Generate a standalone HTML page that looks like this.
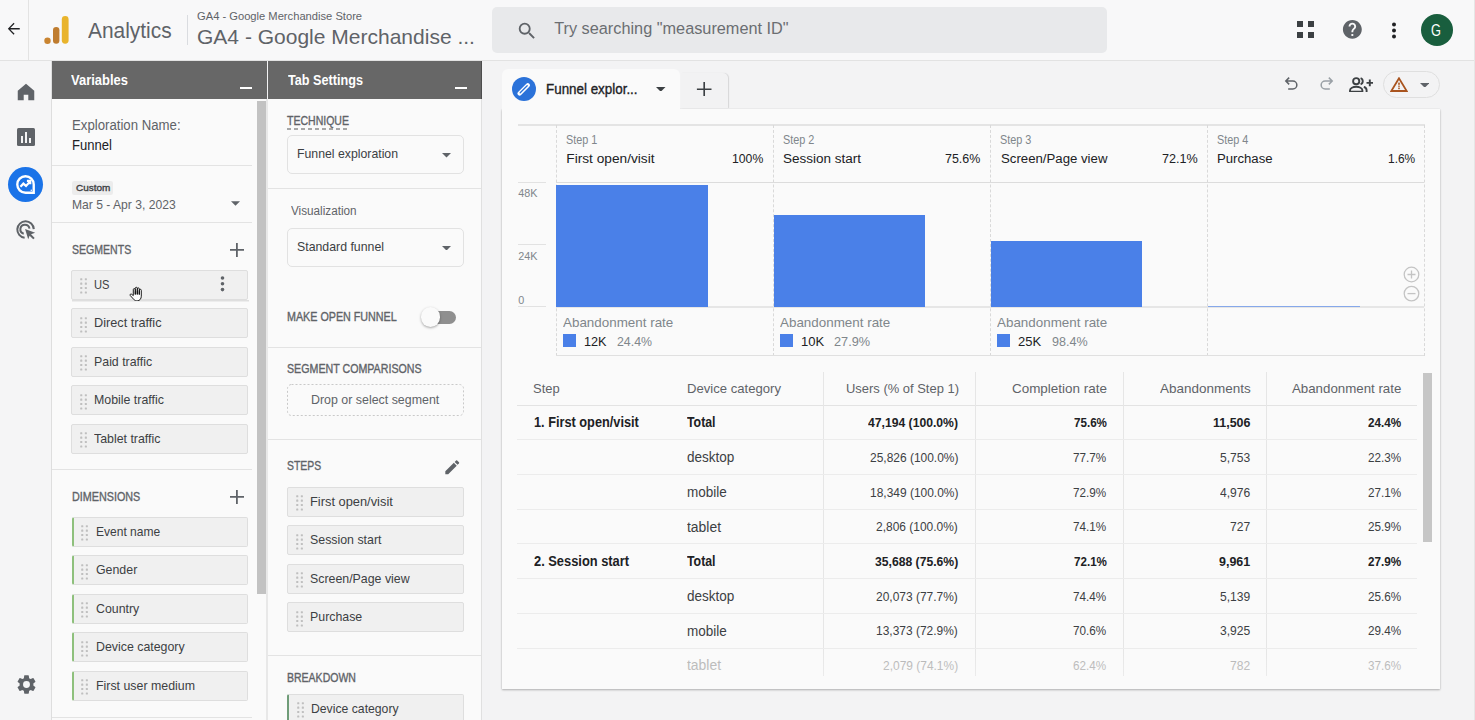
<!DOCTYPE html><html><head><meta charset="utf-8"><style>
*{box-sizing:border-box;margin:0;padding:0}
html,body{width:1475px;height:720px;overflow:hidden}
body{position:relative;background:#f3f3f4;font-family:"Liberation Sans",sans-serif;color:#202124}
.a{position:absolute}
.t{position:absolute;white-space:nowrap;line-height:1}
</style></head><body>
<div class="a" style="left:0px;top:0px;width:1475px;height:61px;background:#f8f8f9;border-bottom:1px solid #e2e2e2"></div>
<div class="a" style="left:28px;top:0px;width:1px;height:60px;background:#e3e3e3;"></div>
<svg class="a" style="left:6.6px;top:22.2px;" width="13.6" height="13.6" viewBox="0 0 16 16"><path d="M15 7.2H3.9l5-5L7.8 1 1 8l6.8 7 1.1-1.1-5-5H15z" fill="#202124"/></svg>
<svg class="a" style="left:43px;top:15px;" width="28" height="30" viewBox="0 0 28 30"><rect x="18.8" y="1.1" width="6.8" height="27.6" rx="3.4" fill="#e9b42c"/><rect x="10" y="12.1" width="6.4" height="16.6" rx="3.2" fill="#bf7c2f"/><circle cx="4.5" cy="25.7" r="3.2" fill="#c98431"/></svg>
<div class="t" style="left:87.50px;top:19.77px;font-size:21.8px;color:#5f6368;transform:scaleX(0.9587);transform-origin:0 0;">Analytics</div>
<div class="a" style="left:187px;top:15px;width:1px;height:30px;background:#dadce0;"></div>
<div class="t" style="left:196.70px;top:10.81px;font-size:11.4px;color:#5f6368;transform:scaleX(0.9801);transform-origin:0 0;">GA4 - Google Merchandise Store</div>
<div class="t" style="left:196.70px;top:27.02px;font-size:20.8px;color:#5f6368;transform:scaleX(1.0102);transform-origin:0 0;">GA4 - Google Merchandise ...</div>
<div class="a" style="left:492px;top:7px;width:615px;height:46px;background:#e8e9eb;border-radius:5px"></div>
<svg class="a" style="left:516px;top:20px;" width="22" height="22" viewBox="0 0 24 24"><path d="M15.5 14h-.79l-.28-.27A6.47 6.47 0 0 0 16 9.5 6.5 6.5 0 1 0 9.5 16c1.61 0 3.09-.59 4.23-1.57l.27.28v.79l5 4.99L20.49 19l-4.99-5zm-6 0C7.01 14 5 11.99 5 9.5S7.01 5 9.5 5 14 7.01 14 9.5 11.99 14 9.5 14z" fill="#5f6368"/></svg>
<div class="t" style="left:554.20px;top:20.14px;font-size:16.3px;color:#6b6e72;">Try searching "measurement ID"</div>
<svg class="a" style="left:1297px;top:21px;" width="18" height="18" viewBox="0 0 18 18"><g fill="#3c4043"><rect x="0" y="0" width="6" height="6"/><rect x="11" y="0" width="6" height="6"/><rect x="0" y="11" width="6" height="6"/><rect x="11" y="11" width="6" height="6"/></g></svg>
<svg class="a" style="left:1340.6px;top:18.4px;" width="22.7" height="22.7" viewBox="0 0 24 24"><path d="M12 2C6.48 2 2 6.48 2 12s4.48 10 10 10 10-4.48 10-10S17.52 2 12 2zm1 17h-2v-2h2v2zm2.07-7.75l-.9.92C13.45 12.9 13 13.5 13 15h-2v-.5c0-1.1.45-2.1 1.17-2.83l1.24-1.26c.37-.36.59-.86.59-1.41 0-1.1-.9-2-2-2s-2 .9-2 2H8c0-2.21 1.79-4 4-4s4 1.79 4 4c0 .88-.36 1.68-.93 2.25z" fill="#5f6368"/></svg>
<svg class="a" style="left:1390px;top:21px;" width="8" height="18" viewBox="0 0 8 18"><g fill="#202124"><circle cx="4" cy="3.5" r="2"/><circle cx="4" cy="9.5" r="2"/><circle cx="4" cy="15.5" r="2"/></g></svg>
<div class="a" style="left:1421px;top:14px;width:32px;height:32px;background:#195e3e;border-radius:50%"></div>
<div class="t" style="left:1431.40px;top:21.85px;font-size:16.3px;color:#fff;transform:scaleX(0.7865);transform-origin:0 0;">G</div>
<div class="a" style="left:1473.5px;top:0px;width:1.5px;height:720px;background:#e6e6e6;"></div>
<div class="a" style="left:0px;top:61px;width:52px;height:659px;background:#f5f5f6;"></div>
<svg class="a" style="left:15px;top:81px;" width="22" height="22" viewBox="0 0 24 24"><path d="M12 3 3 10.5V21h6.5v-6h5v6H21V10.5z" fill="#5f6368"/></svg>
<svg class="a" style="left:17px;top:128px;" width="18" height="18" viewBox="0 0 18 18"><rect x="0" y="0" width="18" height="18" rx="1.5" fill="#5f6368"/><rect x="4" y="8" width="2" height="7" fill="#f3f3f4"/><rect x="8" y="4" width="2" height="11" fill="#f3f3f4"/><rect x="12" y="10" width="2" height="5" fill="#f3f3f4"/></svg>
<div class="a" style="left:8px;top:167px;width:35px;height:35px;background:#1a73e8;border-radius:50%"></div>
<svg class="a" style="left:15px;top:174px;" width="21" height="21" viewBox="0 0 24 24"><path d="M12 2.6a9.4 9.4 0 1 0 0 18.8h9.4V12A9.4 9.4 0 0 0 12 2.6z" fill="none" stroke="#fff" stroke-width="2.7"/><path d="M6.2 14.6l3.4-3.6 3 2.6 4.6-5M13.6 7.9h3.8v3.8" fill="none" stroke="#fff" stroke-width="2.5"/><circle cx="18.6" cy="18.6" r="0.9" fill="#fff"/></svg>
<svg class="a" style="left:15px;top:219px;" width="22" height="22" viewBox="0 0 24 24"><path d="M10.5 20.5A9 9 0 1 1 20.5 11" fill="none" stroke="#5f6368" stroke-width="2.2"/><path d="M9.5 16a5 5 0 1 1 6.3-5.5" fill="none" stroke="#5f6368" stroke-width="2.2"/><path d="M11 11l11 4-4.5 1.6 4 4-1.6 1.6-4-4L14.4 22z" fill="#5f6368"/></svg>
<svg class="a" style="left:14.5px;top:672.5px;" width="23" height="23" viewBox="0 0 24 24"><path d="M19.14 12.94c.04-.3.06-.61.06-.94 0-.32-.02-.64-.07-.94l2.03-1.58a.49.49 0 0 0 .12-.61l-1.92-3.32a.49.49 0 0 0-.59-.22l-2.39.96c-.5-.38-1.03-.7-1.62-.94l-.36-2.54a.48.48 0 0 0-.48-.41h-3.84c-.24 0-.43.17-.47.41l-.36 2.54c-.59.24-1.13.57-1.62.94l-2.39-.96a.49.49 0 0 0-.59.22L2.74 8.87c-.12.21-.08.47.12.61l2.03 1.58c-.05.3-.09.63-.09.94s.02.64.07.94l-2.03 1.58a.49.49 0 0 0-.12.61l1.92 3.32c.12.22.37.29.59.22l2.39-.96c.5.38 1.03.7 1.62.94l.36 2.54c.05.24.24.41.48.41h3.84c.24 0 .44-.17.47-.41l.36-2.54c.59-.24 1.13-.56 1.62-.94l2.39.96c.22.08.47 0 .59-.22l1.92-3.32c.12-.22.07-.47-.12-.61l-2.01-1.58zM12 15.6A3.6 3.6 0 1 1 12 8.4a3.6 3.6 0 0 1 0 7.2z" fill="#5f6368"/></svg>
<div class="a" style="left:52px;top:61px;width:215px;height:38px;background:#676767;"></div>
<div class="t" style="left:71.40px;top:71.95px;font-size:15px;color:#fff;font-weight:bold;transform:scaleX(0.8641);transform-origin:0 0;">Variables</div>
<div class="a" style="left:240px;top:86.6px;width:12px;height:2.1px;background:#fff;"></div>
<div class="a" style="left:268px;top:61px;width:214px;height:38px;background:#676767;"></div>
<div class="a" style="left:481px;top:61px;width:1px;height:38px;background:#4d4d4d;"></div>
<div class="t" style="left:287.50px;top:71.95px;font-size:15px;color:#fff;font-weight:bold;transform:scaleX(0.8428);transform-origin:0 0;">Tab Settings</div>
<div class="a" style="left:455px;top:86.6px;width:12px;height:2.1px;background:#fff;"></div>
<div class="a" style="left:52px;top:99px;width:215px;height:621px;background:#fafafa;"></div>
<div class="a" style="left:51px;top:61px;width:1px;height:659px;background:#dedede;"></div>
<div class="a" style="left:266px;top:99px;width:2px;height:621px;background:#e8e8e8;"></div>
<div class="a" style="left:257px;top:101px;width:9px;height:493px;background:#c2c2c2;"></div>
<div class="t" style="left:72.10px;top:117.80px;font-size:14px;color:#5f6368;transform:scaleX(0.9431);transform-origin:0 0;">Exploration Name:</div>
<div class="t" style="left:72.10px;top:137.90px;font-size:14px;color:#202124;transform:scaleX(0.9314);transform-origin:0 0;">Funnel</div>
<div class="a" style="left:52px;top:165px;width:200px;height:1px;background:#e3e3e3;"></div>
<div class="a" style="left:72px;top:180.5px;width:41px;height:14.6px;background:#ececec;border-radius:2px"></div>
<div class="t" style="left:75.80px;top:182.57px;font-size:9.8px;color:#3c4043;-webkit-text-stroke:0.35px #3c4043;transform:scaleX(1.0189);transform-origin:0 0;">Custom</div>
<div class="t" style="left:72.10px;top:197.81px;font-size:13.4px;color:#5f6368;transform:scaleX(0.9041);transform-origin:0 0;">Mar 5 - Apr 3, 2023</div>
<svg class="a" style="left:231px;top:201px;" width="9" height="5" viewBox="0 0 10 5"><path d="M0 0h10L5 5z" fill="#5f6368"/></svg>
<div class="a" style="left:52px;top:222px;width:200px;height:1px;background:#e3e3e3;"></div>
<div class="t" style="left:71.80px;top:243.64px;font-size:12.3px;color:#5f6368;-webkit-text-stroke:0.35px #5f6368;transform:scaleX(0.8579);transform-origin:0 0;">SEGMENTS</div>
<svg class="a" style="left:230px;top:243px;" width="14" height="14" viewBox="0 0 14 14"><path d="M6 0h1.8v6H14v1.8H7.8V14H6V7.8H0V6h6z" fill="#5f6368"/></svg>
<div class="a" style="left:71.2px;top:269.5px;width:177px;height:30px;background:#f0f0f0;border:1px solid #dedede;border-radius:2px;"></div>
<svg class="a" style="left:79.5px;top:278.3px;" width="7" height="16" viewBox="0 0 7 16"><g fill="#bfbfbf"><rect x="0.19999999999999996" y="0.19999999999999996" width="2.1" height="2.1" rx="0.5"/><rect x="0.19999999999999996" y="4.6" width="2.1" height="2.1" rx="0.5"/><rect x="0.19999999999999996" y="9" width="2.1" height="2.1" rx="0.5"/><rect x="0.19999999999999996" y="13.4" width="2.1" height="2.1" rx="0.5"/><rect x="4.8" y="0.19999999999999996" width="2.1" height="2.1" rx="0.5"/><rect x="4.8" y="4.6" width="2.1" height="2.1" rx="0.5"/><rect x="4.8" y="9" width="2.1" height="2.1" rx="0.5"/><rect x="4.8" y="13.4" width="2.1" height="2.1" rx="0.5"/></g></svg>
<div class="t" style="left:93.60px;top:277.50px;font-size:13.3px;color:#3c4043;transform:scaleX(0.8384);transform-origin:0 0;">US</div>
<div class="a" style="left:71.2px;top:308.0px;width:177px;height:30px;background:#f0f0f0;border:1px solid #dedede;border-radius:2px;"></div>
<svg class="a" style="left:79.5px;top:316.8px;" width="7" height="16" viewBox="0 0 7 16"><g fill="#bfbfbf"><rect x="0.19999999999999996" y="0.19999999999999996" width="2.1" height="2.1" rx="0.5"/><rect x="0.19999999999999996" y="4.6" width="2.1" height="2.1" rx="0.5"/><rect x="0.19999999999999996" y="9" width="2.1" height="2.1" rx="0.5"/><rect x="0.19999999999999996" y="13.4" width="2.1" height="2.1" rx="0.5"/><rect x="4.8" y="0.19999999999999996" width="2.1" height="2.1" rx="0.5"/><rect x="4.8" y="4.6" width="2.1" height="2.1" rx="0.5"/><rect x="4.8" y="9" width="2.1" height="2.1" rx="0.5"/><rect x="4.8" y="13.4" width="2.1" height="2.1" rx="0.5"/></g></svg>
<div class="t" style="left:93.60px;top:316.00px;font-size:13.3px;color:#3c4043;transform:scaleX(0.9549);transform-origin:0 0;">Direct traffic</div>
<div class="a" style="left:71.2px;top:346.5px;width:177px;height:30px;background:#f0f0f0;border:1px solid #dedede;border-radius:2px;"></div>
<svg class="a" style="left:79.5px;top:355.3px;" width="7" height="16" viewBox="0 0 7 16"><g fill="#bfbfbf"><rect x="0.19999999999999996" y="0.19999999999999996" width="2.1" height="2.1" rx="0.5"/><rect x="0.19999999999999996" y="4.6" width="2.1" height="2.1" rx="0.5"/><rect x="0.19999999999999996" y="9" width="2.1" height="2.1" rx="0.5"/><rect x="0.19999999999999996" y="13.4" width="2.1" height="2.1" rx="0.5"/><rect x="4.8" y="0.19999999999999996" width="2.1" height="2.1" rx="0.5"/><rect x="4.8" y="4.6" width="2.1" height="2.1" rx="0.5"/><rect x="4.8" y="9" width="2.1" height="2.1" rx="0.5"/><rect x="4.8" y="13.4" width="2.1" height="2.1" rx="0.5"/></g></svg>
<div class="t" style="left:93.60px;top:354.50px;font-size:13.3px;color:#3c4043;transform:scaleX(0.9300);transform-origin:0 0;">Paid traffic</div>
<div class="a" style="left:71.2px;top:385.0px;width:177px;height:30px;background:#f0f0f0;border:1px solid #dedede;border-radius:2px;"></div>
<svg class="a" style="left:79.5px;top:393.8px;" width="7" height="16" viewBox="0 0 7 16"><g fill="#bfbfbf"><rect x="0.19999999999999996" y="0.19999999999999996" width="2.1" height="2.1" rx="0.5"/><rect x="0.19999999999999996" y="4.6" width="2.1" height="2.1" rx="0.5"/><rect x="0.19999999999999996" y="9" width="2.1" height="2.1" rx="0.5"/><rect x="0.19999999999999996" y="13.4" width="2.1" height="2.1" rx="0.5"/><rect x="4.8" y="0.19999999999999996" width="2.1" height="2.1" rx="0.5"/><rect x="4.8" y="4.6" width="2.1" height="2.1" rx="0.5"/><rect x="4.8" y="9" width="2.1" height="2.1" rx="0.5"/><rect x="4.8" y="13.4" width="2.1" height="2.1" rx="0.5"/></g></svg>
<div class="t" style="left:93.60px;top:393.00px;font-size:13.3px;color:#3c4043;transform:scaleX(0.9300);transform-origin:0 0;">Mobile traffic</div>
<div class="a" style="left:71.2px;top:423.5px;width:177px;height:30px;background:#f0f0f0;border:1px solid #dedede;border-radius:2px;"></div>
<svg class="a" style="left:79.5px;top:432.3px;" width="7" height="16" viewBox="0 0 7 16"><g fill="#bfbfbf"><rect x="0.19999999999999996" y="0.19999999999999996" width="2.1" height="2.1" rx="0.5"/><rect x="0.19999999999999996" y="4.6" width="2.1" height="2.1" rx="0.5"/><rect x="0.19999999999999996" y="9" width="2.1" height="2.1" rx="0.5"/><rect x="0.19999999999999996" y="13.4" width="2.1" height="2.1" rx="0.5"/><rect x="4.8" y="0.19999999999999996" width="2.1" height="2.1" rx="0.5"/><rect x="4.8" y="4.6" width="2.1" height="2.1" rx="0.5"/><rect x="4.8" y="9" width="2.1" height="2.1" rx="0.5"/><rect x="4.8" y="13.4" width="2.1" height="2.1" rx="0.5"/></g></svg>
<div class="t" style="left:93.60px;top:431.50px;font-size:13.3px;color:#3c4043;transform:scaleX(0.9300);transform-origin:0 0;">Tablet traffic</div>
<div class="a" style="left:71.5px;top:299.5px;width:177px;height:2px;background:linear-gradient(#d8d8d8,#f4f4f4)"></div>
<svg class="a" style="left:220px;top:276px;" width="5" height="16" viewBox="0 0 5 16"><g fill="#5f6368"><circle cx="2.5" cy="2" r="1.8"/><circle cx="2.5" cy="7.8" r="1.8"/><circle cx="2.5" cy="13.6" r="1.8"/></g></svg>
<div class="a" style="left:52px;top:469px;width:200px;height:1px;background:#e3e3e3;"></div>
<div class="t" style="left:71.80px;top:490.56px;font-size:12.4px;color:#5f6368;-webkit-text-stroke:0.35px #5f6368;transform:scaleX(0.8695);transform-origin:0 0;">DIMENSIONS</div>
<svg class="a" style="left:230px;top:490px;" width="14" height="14" viewBox="0 0 14 14"><path d="M6 0h1.8v6H14v1.8H7.8V14H6V7.8H0V6h6z" fill="#5f6368"/></svg>
<div class="a" style="left:71.8px;top:516.5px;width:176.5px;height:30px;background:#f0f0f0;border:1px solid #dedede;border-radius:2px;border-left:2.5px solid #8ec07c;"></div>
<svg class="a" style="left:81.1px;top:525.3px;" width="7" height="16" viewBox="0 0 7 16"><g fill="#bfbfbf"><rect x="0.19999999999999996" y="0.19999999999999996" width="2.1" height="2.1" rx="0.5"/><rect x="0.19999999999999996" y="4.6" width="2.1" height="2.1" rx="0.5"/><rect x="0.19999999999999996" y="9" width="2.1" height="2.1" rx="0.5"/><rect x="0.19999999999999996" y="13.4" width="2.1" height="2.1" rx="0.5"/><rect x="4.8" y="0.19999999999999996" width="2.1" height="2.1" rx="0.5"/><rect x="4.8" y="4.6" width="2.1" height="2.1" rx="0.5"/><rect x="4.8" y="9" width="2.1" height="2.1" rx="0.5"/><rect x="4.8" y="13.4" width="2.1" height="2.1" rx="0.5"/></g></svg>
<div class="t" style="left:96.00px;top:524.50px;font-size:13.3px;color:#3c4043;transform:scaleX(0.9048);transform-origin:0 0;">Event name</div>
<div class="a" style="left:71.8px;top:555.0px;width:176.5px;height:30px;background:#f0f0f0;border:1px solid #dedede;border-radius:2px;border-left:2.5px solid #8ec07c;"></div>
<svg class="a" style="left:81.1px;top:563.8px;" width="7" height="16" viewBox="0 0 7 16"><g fill="#bfbfbf"><rect x="0.19999999999999996" y="0.19999999999999996" width="2.1" height="2.1" rx="0.5"/><rect x="0.19999999999999996" y="4.6" width="2.1" height="2.1" rx="0.5"/><rect x="0.19999999999999996" y="9" width="2.1" height="2.1" rx="0.5"/><rect x="0.19999999999999996" y="13.4" width="2.1" height="2.1" rx="0.5"/><rect x="4.8" y="0.19999999999999996" width="2.1" height="2.1" rx="0.5"/><rect x="4.8" y="4.6" width="2.1" height="2.1" rx="0.5"/><rect x="4.8" y="9" width="2.1" height="2.1" rx="0.5"/><rect x="4.8" y="13.4" width="2.1" height="2.1" rx="0.5"/></g></svg>
<div class="t" style="left:96.00px;top:563.00px;font-size:13.3px;color:#3c4043;transform:scaleX(0.9300);transform-origin:0 0;">Gender</div>
<div class="a" style="left:71.8px;top:593.5px;width:176.5px;height:30px;background:#f0f0f0;border:1px solid #dedede;border-radius:2px;border-left:2.5px solid #8ec07c;"></div>
<svg class="a" style="left:81.1px;top:602.3px;" width="7" height="16" viewBox="0 0 7 16"><g fill="#bfbfbf"><rect x="0.19999999999999996" y="0.19999999999999996" width="2.1" height="2.1" rx="0.5"/><rect x="0.19999999999999996" y="4.6" width="2.1" height="2.1" rx="0.5"/><rect x="0.19999999999999996" y="9" width="2.1" height="2.1" rx="0.5"/><rect x="0.19999999999999996" y="13.4" width="2.1" height="2.1" rx="0.5"/><rect x="4.8" y="0.19999999999999996" width="2.1" height="2.1" rx="0.5"/><rect x="4.8" y="4.6" width="2.1" height="2.1" rx="0.5"/><rect x="4.8" y="9" width="2.1" height="2.1" rx="0.5"/><rect x="4.8" y="13.4" width="2.1" height="2.1" rx="0.5"/></g></svg>
<div class="t" style="left:96.00px;top:601.50px;font-size:13.3px;color:#3c4043;transform:scaleX(0.9300);transform-origin:0 0;">Country</div>
<div class="a" style="left:71.8px;top:632.0px;width:176.5px;height:30px;background:#f0f0f0;border:1px solid #dedede;border-radius:2px;border-left:2.5px solid #8ec07c;"></div>
<svg class="a" style="left:81.1px;top:640.8px;" width="7" height="16" viewBox="0 0 7 16"><g fill="#bfbfbf"><rect x="0.19999999999999996" y="0.19999999999999996" width="2.1" height="2.1" rx="0.5"/><rect x="0.19999999999999996" y="4.6" width="2.1" height="2.1" rx="0.5"/><rect x="0.19999999999999996" y="9" width="2.1" height="2.1" rx="0.5"/><rect x="0.19999999999999996" y="13.4" width="2.1" height="2.1" rx="0.5"/><rect x="4.8" y="0.19999999999999996" width="2.1" height="2.1" rx="0.5"/><rect x="4.8" y="4.6" width="2.1" height="2.1" rx="0.5"/><rect x="4.8" y="9" width="2.1" height="2.1" rx="0.5"/><rect x="4.8" y="13.4" width="2.1" height="2.1" rx="0.5"/></g></svg>
<div class="t" style="left:96.00px;top:640.00px;font-size:13.3px;color:#3c4043;transform:scaleX(0.9300);transform-origin:0 0;">Device category</div>
<div class="a" style="left:71.8px;top:670.5px;width:176.5px;height:30px;background:#f0f0f0;border:1px solid #dedede;border-radius:2px;border-left:2.5px solid #8ec07c;"></div>
<svg class="a" style="left:81.1px;top:679.3px;" width="7" height="16" viewBox="0 0 7 16"><g fill="#bfbfbf"><rect x="0.19999999999999996" y="0.19999999999999996" width="2.1" height="2.1" rx="0.5"/><rect x="0.19999999999999996" y="4.6" width="2.1" height="2.1" rx="0.5"/><rect x="0.19999999999999996" y="9" width="2.1" height="2.1" rx="0.5"/><rect x="0.19999999999999996" y="13.4" width="2.1" height="2.1" rx="0.5"/><rect x="4.8" y="0.19999999999999996" width="2.1" height="2.1" rx="0.5"/><rect x="4.8" y="4.6" width="2.1" height="2.1" rx="0.5"/><rect x="4.8" y="9" width="2.1" height="2.1" rx="0.5"/><rect x="4.8" y="13.4" width="2.1" height="2.1" rx="0.5"/></g></svg>
<div class="t" style="left:96.00px;top:678.50px;font-size:13.3px;color:#3c4043;transform:scaleX(0.9300);transform-origin:0 0;">First user medium</div>
<div class="a" style="left:52px;top:717px;width:200px;height:1px;background:#e3e3e3;"></div>
<svg class="a" style="left:128.5px;top:285.5px;" width="15.5" height="15.5" viewBox="0 0 15.5 15.5"><g fill="#fff" stroke="#111" stroke-width="0.95" stroke-linejoin="round"><path d="M4.3 9V3.6a1 1 0 0 1 2 0V8.4V2.3a1 1 0 0 1 2 0v6.1V2.9a1 1 0 0 1 2 0v5.6V4.3a1 1 0 0 1 2 0v5.9c0 2.6-1.6 4.6-4 4.6H7.6c-1.4 0-2.2-.6-3-1.6L1.3 9.6a.95.95 0 0 1 1.4-1.3L4.3 9.6z"/></g><path d="M6.3 5.5v3M8.3 5v3.4M10.3 5.5v3" stroke="#111" stroke-width="0.7"/></svg>
<div class="a" style="left:268px;top:99px;width:213px;height:621px;background:#fafafa;"></div>
<div class="a" style="left:481px;top:99px;width:1px;height:621px;background:#e0e0e0;"></div>
<div class="t" style="left:287.20px;top:114.50px;font-size:12px;color:#5f6368;-webkit-text-stroke:0.35px #5f6368;transform:scaleX(0.8772);transform-origin:0 0;">TECHNIQUE</div>
<svg class="a" style="left:287px;top:128px;" width="63" height="2" viewBox="0 0 63 2"><line x1="0" y1="1" x2="63" y2="1" stroke="#8a8a8a" stroke-width="1.3" stroke-dasharray="4 3"/></svg>
<div class="a" style="left:287.4px;top:135.3px;width:176.3px;height:39px;border:1px solid #e2e2e2;border-radius:5px;background:#fafafa"></div>
<div class="t" style="left:296.80px;top:147.07px;font-size:13.1px;color:#3c4043;transform:scaleX(0.9377);transform-origin:0 0;">Funnel exploration</div>
<svg class="a" style="left:441.7px;top:153.10000000000002px;" width="9" height="4.6" viewBox="0 0 10 5"><path d="M0 0h10L5 5z" fill="#5f6368"/></svg>
<div class="a" style="left:268px;top:187.5px;width:213px;height:1px;background:#e3e3e3;"></div>
<div class="t" style="left:291.00px;top:204.50px;font-size:12px;color:#5f6368;transform:scaleX(0.9756);transform-origin:0 0;">Visualization</div>
<div class="a" style="left:287.4px;top:228px;width:176.3px;height:39px;border:1px solid #e2e2e2;border-radius:5px;background:#fafafa"></div>
<div class="t" style="left:296.80px;top:239.77px;font-size:13.1px;color:#3c4043;transform:scaleX(0.9407);transform-origin:0 0;">Standard funnel</div>
<svg class="a" style="left:441.7px;top:245.8px;" width="9" height="4.6" viewBox="0 0 10 5"><path d="M0 0h10L5 5z" fill="#5f6368"/></svg>
<div class="t" style="left:287.30px;top:310.60px;font-size:12px;color:#5f6368;-webkit-text-stroke:0.35px #5f6368;transform:scaleX(0.8941);transform-origin:0 0;">MAKE OPEN FUNNEL</div>
<div class="a" style="left:425px;top:310.8px;width:30.5px;height:13px;background:#8f8f8f;border-radius:7px"></div>
<div class="a" style="left:420.5px;top:307.4px;width:19.6px;height:19.6px;background:#fafafa;border-radius:50%;box-shadow:0 1px 2.5px rgba(0,0,0,.35)"></div>
<div class="a" style="left:268px;top:347px;width:213px;height:1px;background:#e3e3e3;"></div>
<div class="t" style="left:287.30px;top:363.33px;font-size:12.2px;color:#5f6368;-webkit-text-stroke:0.35px #5f6368;transform:scaleX(0.8742);transform-origin:0 0;">SEGMENT COMPARISONS</div>
<svg class="a" style="left:287px;top:384.2px;" width="177" height="32" viewBox="0 0 177 32"><rect x="0.5" y="0.5" width="176" height="31" rx="4" fill="none" stroke="#c9c9c9" stroke-width="1" stroke-dasharray="2 2"/></svg>
<div class="t" style="left:311.20px;top:393.14px;font-size:13.6px;color:#5f6368;transform:scaleX(0.9124);transform-origin:0 0;">Drop or select segment</div>
<div class="a" style="left:268px;top:439px;width:213px;height:1px;background:#e3e3e3;"></div>
<div class="t" style="left:287.20px;top:460.19px;font-size:12.6px;color:#5f6368;-webkit-text-stroke:0.35px #5f6368;transform:scaleX(0.8251);transform-origin:0 0;">STEPS</div>
<svg class="a" style="left:443px;top:458px;" width="18.5" height="18.5" viewBox="0 0 24 24"><path d="M3 17.25V21h3.75L17.81 9.94l-3.75-3.75L3 17.25zM20.71 7.04a1 1 0 0 0 0-1.41l-2.34-2.34a1 1 0 0 0-1.41 0l-1.83 1.83 3.75 3.75 1.83-1.83z" fill="#5f6368"/></svg>
<div class="a" style="left:287.2px;top:486.5px;width:176.7px;height:30px;background:#f0f0f0;border:1px solid #dedede;border-radius:2px;"></div>
<svg class="a" style="left:295.5px;top:495.3px;" width="7" height="16" viewBox="0 0 7 16"><g fill="#bfbfbf"><rect x="0.19999999999999996" y="0.19999999999999996" width="2.1" height="2.1" rx="0.5"/><rect x="0.19999999999999996" y="4.6" width="2.1" height="2.1" rx="0.5"/><rect x="0.19999999999999996" y="9" width="2.1" height="2.1" rx="0.5"/><rect x="0.19999999999999996" y="13.4" width="2.1" height="2.1" rx="0.5"/><rect x="4.8" y="0.19999999999999996" width="2.1" height="2.1" rx="0.5"/><rect x="4.8" y="4.6" width="2.1" height="2.1" rx="0.5"/><rect x="4.8" y="9" width="2.1" height="2.1" rx="0.5"/><rect x="4.8" y="13.4" width="2.1" height="2.1" rx="0.5"/></g></svg>
<div class="t" style="left:309.60px;top:494.50px;font-size:13.3px;color:#3c4043;transform:scaleX(0.9660);transform-origin:0 0;">First open/visit</div>
<div class="a" style="left:287.2px;top:525.0px;width:176.7px;height:30px;background:#f0f0f0;border:1px solid #dedede;border-radius:2px;"></div>
<svg class="a" style="left:295.5px;top:533.8px;" width="7" height="16" viewBox="0 0 7 16"><g fill="#bfbfbf"><rect x="0.19999999999999996" y="0.19999999999999996" width="2.1" height="2.1" rx="0.5"/><rect x="0.19999999999999996" y="4.6" width="2.1" height="2.1" rx="0.5"/><rect x="0.19999999999999996" y="9" width="2.1" height="2.1" rx="0.5"/><rect x="0.19999999999999996" y="13.4" width="2.1" height="2.1" rx="0.5"/><rect x="4.8" y="0.19999999999999996" width="2.1" height="2.1" rx="0.5"/><rect x="4.8" y="4.6" width="2.1" height="2.1" rx="0.5"/><rect x="4.8" y="9" width="2.1" height="2.1" rx="0.5"/><rect x="4.8" y="13.4" width="2.1" height="2.1" rx="0.5"/></g></svg>
<div class="t" style="left:309.60px;top:533.00px;font-size:13.3px;color:#3c4043;transform:scaleX(0.9300);transform-origin:0 0;">Session start</div>
<div class="a" style="left:287.2px;top:563.5px;width:176.7px;height:30px;background:#f0f0f0;border:1px solid #dedede;border-radius:2px;"></div>
<svg class="a" style="left:295.5px;top:572.3px;" width="7" height="16" viewBox="0 0 7 16"><g fill="#bfbfbf"><rect x="0.19999999999999996" y="0.19999999999999996" width="2.1" height="2.1" rx="0.5"/><rect x="0.19999999999999996" y="4.6" width="2.1" height="2.1" rx="0.5"/><rect x="0.19999999999999996" y="9" width="2.1" height="2.1" rx="0.5"/><rect x="0.19999999999999996" y="13.4" width="2.1" height="2.1" rx="0.5"/><rect x="4.8" y="0.19999999999999996" width="2.1" height="2.1" rx="0.5"/><rect x="4.8" y="4.6" width="2.1" height="2.1" rx="0.5"/><rect x="4.8" y="9" width="2.1" height="2.1" rx="0.5"/><rect x="4.8" y="13.4" width="2.1" height="2.1" rx="0.5"/></g></svg>
<div class="t" style="left:309.60px;top:571.50px;font-size:13.3px;color:#3c4043;transform:scaleX(0.9300);transform-origin:0 0;">Screen/Page view</div>
<div class="a" style="left:287.2px;top:602.0px;width:176.7px;height:30px;background:#f0f0f0;border:1px solid #dedede;border-radius:2px;"></div>
<svg class="a" style="left:295.5px;top:610.8px;" width="7" height="16" viewBox="0 0 7 16"><g fill="#bfbfbf"><rect x="0.19999999999999996" y="0.19999999999999996" width="2.1" height="2.1" rx="0.5"/><rect x="0.19999999999999996" y="4.6" width="2.1" height="2.1" rx="0.5"/><rect x="0.19999999999999996" y="9" width="2.1" height="2.1" rx="0.5"/><rect x="0.19999999999999996" y="13.4" width="2.1" height="2.1" rx="0.5"/><rect x="4.8" y="0.19999999999999996" width="2.1" height="2.1" rx="0.5"/><rect x="4.8" y="4.6" width="2.1" height="2.1" rx="0.5"/><rect x="4.8" y="9" width="2.1" height="2.1" rx="0.5"/><rect x="4.8" y="13.4" width="2.1" height="2.1" rx="0.5"/></g></svg>
<div class="t" style="left:309.60px;top:610.00px;font-size:13.3px;color:#3c4043;transform:scaleX(0.9300);transform-origin:0 0;">Purchase</div>
<div class="a" style="left:268px;top:655px;width:213px;height:1px;background:#e3e3e3;"></div>
<div class="t" style="left:287.20px;top:672.00px;font-size:12px;color:#5f6368;-webkit-text-stroke:0.35px #5f6368;transform:scaleX(0.8759);transform-origin:0 0;">BREAKDOWN</div>
<div class="a" style="left:287.2px;top:693.5px;width:176.7px;height:30px;background:#f0f0f0;border:1px solid #dedede;border-radius:2px;border-left:2.5px solid #6f9c78;"></div>
<svg class="a" style="left:296.5px;top:702.3px;" width="7" height="16" viewBox="0 0 7 16"><g fill="#bfbfbf"><rect x="0.19999999999999996" y="0.19999999999999996" width="2.1" height="2.1" rx="0.5"/><rect x="0.19999999999999996" y="4.6" width="2.1" height="2.1" rx="0.5"/><rect x="0.19999999999999996" y="9" width="2.1" height="2.1" rx="0.5"/><rect x="0.19999999999999996" y="13.4" width="2.1" height="2.1" rx="0.5"/><rect x="4.8" y="0.19999999999999996" width="2.1" height="2.1" rx="0.5"/><rect x="4.8" y="4.6" width="2.1" height="2.1" rx="0.5"/><rect x="4.8" y="9" width="2.1" height="2.1" rx="0.5"/><rect x="4.8" y="13.4" width="2.1" height="2.1" rx="0.5"/></g></svg>
<div class="t" style="left:311.40px;top:701.50px;font-size:13.3px;color:#3c4043;transform:scaleX(0.9186);transform-origin:0 0;">Device category</div>
<div class="a" style="left:502px;top:108.6px;width:938.3px;height:580.7px;background:#fafafa;box-shadow:0 1px 2px rgba(0,0,0,.28),0 0 1px rgba(0,0,0,.1)"></div>
<div class="a" style="left:502px;top:69px;width:178px;height:42px;background:#fafafa;border-radius:6px 6px 0 0"></div>
<div class="a" style="left:680.5px;top:73px;width:47.5px;height:35px;background:#f2f2f3;border-radius:0 5px 0 0;box-shadow:1px 0 1px rgba(0,0,0,.12)"></div>
<div class="a" style="left:512.2px;top:76.8px;width:24px;height:24px;background:#2b72d9;border-radius:50%"></div>
<svg class="a" style="left:517px;top:82px;" width="14" height="14" viewBox="0 0 14 14"><path d="M2.6 11.4 L10.8 3.2" stroke="#fff" stroke-width="4.2" stroke-linecap="round"/><path d="M3.2 10.8 L10.2 3.8" stroke="#2b72d9" stroke-width="1.3" stroke-linecap="round"/></svg>
<div class="t" style="left:546.40px;top:81.52px;font-size:14.8px;color:#202124;-webkit-text-stroke:0.35px #202124;transform:scaleX(0.9049);transform-origin:0 0;">Funnel explor...</div>
<svg class="a" style="left:656.2px;top:86.5px;" width="9.5" height="4.8" viewBox="0 0 10 5"><path d="M0 0h10L5 5z" fill="#3c4043"/></svg>
<svg class="a" style="left:696px;top:81.9px;" width="16.4" height="14.6" viewBox="0 0 16 16"><path d="M7.1 0h1.8v7.1H16v1.8H8.9V16H7.1V8.9H0V7.1h7.1z" fill="#3c4043"/></svg>
<svg class="a" style="left:1283px;top:76px;" width="17" height="16" viewBox="0 0 24 24"><path d="M8.5 2.5 3.5 7.5 8.5 12.5M4 7.5h10a6 6 0 0 1 0 12H7" fill="none" stroke="#5f6368" stroke-width="2.3"/></svg>
<svg class="a" style="left:1317.5px;top:76px;" width="17" height="16" viewBox="0 0 24 24"><path d="M15.5 2.5l5 5-5 5M20 7.5H10a6 6 0 0 0 0 12h7" fill="none" stroke="#9aa0a6" stroke-width="2.3"/></svg>
<svg class="a" style="left:1348.5px;top:76.8px;" width="24.5" height="15.5" viewBox="0 0 24.5 15.5"><circle cx="7.2" cy="4.2" r="3.1" fill="none" stroke="#3c4043" stroke-width="1.9"/><path d="M1 14.6v-1.2c0-2.3 3-3.6 6.2-3.6s6.2 1.3 6.2 3.6v1.2z" fill="none" stroke="#3c4043" stroke-width="1.9"/><path d="M11.6 1.2a3.3 3.3 0 0 1 0 6.2M14.8 10c1.9.5 2.8 1.7 2.8 3.3v1.9" fill="none" stroke="#3c4043" stroke-width="1.9"/><path d="M20.8 2.6v6.6M17.5 5.9h6.6" stroke="#3c4043" stroke-width="1.9"/></svg>
<div class="a" style="left:1383.3px;top:71.4px;width:56.5px;height:26.8px;border:1px solid #dfdfdf;border-radius:14px"></div>
<svg class="a" style="left:1390px;top:77.2px;" width="18" height="15" viewBox="0 0 18 15"><path d="M9 1.3 1.3 14h15.4z" fill="none" stroke="#a9541f" stroke-width="1.8"/><rect x="8.2" y="5.6" width="1.6" height="2.2" fill="#a9541f"/><rect x="8.2" y="8.6" width="1.6" height="1.2" fill="#a9541f"/><rect x="8.2" y="10.6" width="1.6" height="1.6" fill="#a9541f"/></svg>
<svg class="a" style="left:1419.5px;top:82.7px;" width="9.5" height="4.8" viewBox="0 0 10 5"><path d="M0 0h10L5 5z" fill="#5f6368"/></svg>
<div class="a" style="left:517.6px;top:124.3px;width:907px;height:1.3px;background:#e4e4e4;"></div>
<div class="a" style="left:555.7px;top:125px;width:0;height:231px;border-left:1px dashed #d9d9d9"></div>
<div class="a" style="left:772.8px;top:125px;width:0;height:231px;border-left:1px dashed #d9d9d9"></div>
<div class="a" style="left:990.0px;top:125px;width:0;height:231px;border-left:1px dashed #d9d9d9"></div>
<div class="a" style="left:1206.8px;top:125px;width:0;height:231px;border-left:1px dashed #d9d9d9"></div>
<div class="a" style="left:1424.0px;top:125px;width:0;height:231px;border-left:1px dashed #d9d9d9"></div>
<div class="a" style="left:556.2px;top:181.6px;width:868.3px;height:1.8px;background:#dcdcdc;"></div>
<div class="a" style="left:518.2px;top:182.4px;width:28.2px;height:1px;background:#e2e2e2;"></div>
<div class="a" style="left:518.2px;top:243.9px;width:28.2px;height:1px;background:#e2e2e2;"></div>
<div class="a" style="left:518.2px;top:306.2px;width:28.2px;height:1px;background:#e2e2e2;"></div>
<div class="a" style="left:556.2px;top:306.4px;width:868.3px;height:1.6px;background:#e6e6e6;"></div>
<div class="a" style="left:556.2px;top:355px;width:868.3px;height:1.2px;background:#e0e0e0;"></div>
<div class="t" style="left:565.90px;top:134.47px;font-size:12.5px;color:#80868b;transform:scaleX(0.8664);transform-origin:0 0;">Step 1</div>
<div class="t" style="left:566.30px;top:152.45px;font-size:13.7px;color:#202124;">First open/visit</div>
<div class="t" style="left:732.20px;top:152.45px;font-size:13.7px;color:#202124;transform:scaleX(0.8924);transform-origin:0 0;">100%</div>
<div class="t" style="left:783.00px;top:134.47px;font-size:12.5px;color:#80868b;transform:scaleX(0.8692);transform-origin:0 0;">Step 2</div>
<div class="t" style="left:783.40px;top:152.45px;font-size:13.7px;color:#202124;transform:scaleX(0.9863);transform-origin:0 0;">Session start</div>
<div class="t" style="left:945.40px;top:152.45px;font-size:13.7px;color:#202124;transform:scaleX(0.9089);transform-origin:0 0;">75.6%</div>
<div class="t" style="left:1000.20px;top:134.47px;font-size:12.5px;color:#80868b;transform:scaleX(0.8692);transform-origin:0 0;">Step 3</div>
<div class="t" style="left:1000.60px;top:152.45px;font-size:13.7px;color:#202124;transform:scaleX(0.9648);transform-origin:0 0;">Screen/Page view</div>
<div class="t" style="left:1161.70px;top:152.45px;font-size:13.7px;color:#202124;transform:scaleX(0.9217);transform-origin:0 0;">72.1%</div>
<div class="t" style="left:1217.00px;top:134.47px;font-size:12.5px;color:#80868b;transform:scaleX(0.8692);transform-origin:0 0;">Step 4</div>
<div class="t" style="left:1217.40px;top:152.45px;font-size:13.7px;color:#202124;transform:scaleX(0.9606);transform-origin:0 0;">Purchase</div>
<div class="t" style="left:1387.50px;top:152.45px;font-size:13.7px;color:#202124;transform:scaleX(0.8708);transform-origin:0 0;">1.6%</div>
<div class="t" style="left:518.20px;top:188.12px;font-size:10.8px;color:#80868b;">48K</div>
<div class="t" style="left:518.20px;top:251.02px;font-size:10.8px;color:#80868b;">24K</div>
<div class="t" style="left:518.20px;top:294.82px;font-size:10.8px;color:#80868b;">0</div>
<div class="a" style="left:556.3px;top:184.8px;width:151.5px;height:121.9px;background:#4a80e8;"></div>
<div class="a" style="left:773.6px;top:214.6px;width:151.7px;height:92.1px;background:#4a80e8;"></div>
<div class="a" style="left:990.8px;top:240.7px;width:151.7px;height:66px;background:#4a80e8;"></div>
<div class="a" style="left:1207.5px;top:305.5px;width:152.5px;height:1.4px;background:#86a8ea;"></div>
<svg class="a" style="left:1402px;top:265px;" width="19" height="38" viewBox="0 0 19 38"><circle cx="9.5" cy="9.5" r="7.3" fill="none" stroke="#c4c4c4" stroke-width="1.3"/><path d="M5.5 9.5h8M9.5 5.5v8" stroke="#c4c4c4" stroke-width="1.3"/><circle cx="9.5" cy="28.6" r="7.3" fill="none" stroke="#c4c4c4" stroke-width="1.3"/><path d="M5.5 28.6h8" stroke="#c4c4c4" stroke-width="1.3"/></svg>
<div class="t" style="left:563.10px;top:316.54px;font-size:12.9px;color:#80868b;transform:scaleX(1.0399);transform-origin:0 0;">Abandonment rate</div>
<div class="a" style="left:563.1px;top:334.4px;width:13px;height:13px;background:#4a80e8;"></div>
<div class="t" style="left:583.90px;top:335.64px;font-size:12.9px;color:#202124;transform:scaleX(0.9842);transform-origin:0 0;">12K</div>
<div class="t" style="left:617.30px;top:335.64px;font-size:12.9px;color:#80868b;transform:scaleX(0.9570);transform-origin:0 0;">24.4%</div>
<div class="t" style="left:780.20px;top:316.54px;font-size:12.9px;color:#80868b;transform:scaleX(1.0399);transform-origin:0 0;">Abandonment rate</div>
<div class="a" style="left:780.1999999999999px;top:334.4px;width:13px;height:13px;background:#4a80e8;"></div>
<div class="t" style="left:801.00px;top:335.64px;font-size:12.9px;color:#202124;transform:scaleX(1.0104);transform-origin:0 0;">10K</div>
<div class="t" style="left:834.40px;top:335.64px;font-size:12.9px;color:#80868b;transform:scaleX(0.9871);transform-origin:0 0;">27.9%</div>
<div class="t" style="left:997.40px;top:316.54px;font-size:12.9px;color:#80868b;transform:scaleX(1.0399);transform-origin:0 0;">Abandonment rate</div>
<div class="a" style="left:997.4px;top:334.4px;width:13px;height:13px;background:#4a80e8;"></div>
<div class="t" style="left:1018.20px;top:335.64px;font-size:12.9px;color:#202124;transform:scaleX(1.0104);transform-origin:0 0;">25K</div>
<div class="t" style="left:1051.60px;top:335.64px;font-size:12.9px;color:#80868b;transform:scaleX(0.9734);transform-origin:0 0;">98.4%</div>
<div class="t" style="left:533.40px;top:381.50px;font-size:13.3px;color:#5f6368;transform:scaleX(0.9732);transform-origin:0 0;">Step</div>
<div class="t" style="left:686.80px;top:381.50px;font-size:13.3px;color:#5f6368;transform:scaleX(0.9857);transform-origin:0 0;">Device category</div>
<div class="t" style="left:845.60px;top:381.50px;font-size:13.3px;color:#5f6368;transform:scaleX(0.9738);transform-origin:0 0;">Users (% of Step 1)</div>
<div class="t" style="left:1011.80px;top:381.50px;font-size:13.3px;color:#5f6368;transform:scaleX(1.0107);transform-origin:0 0;">Completion rate</div>
<div class="t" style="left:1159.50px;top:381.50px;font-size:13.3px;color:#5f6368;transform:scaleX(1.0141);transform-origin:0 0;">Abandonments</div>
<div class="t" style="left:1291.94px;top:381.50px;font-size:13.3px;color:#5f6368;">Abandonment rate</div>
<div class="a" style="left:517.3px;top:404.6px;width:899.4000000000001px;height:1.2px;background:#e3e3e3;"></div>
<div class="a" style="left:822.9px;top:372px;width:1px;height:304px;background:#e6e6e6;"></div>
<div class="a" style="left:975.2px;top:372px;width:1px;height:304px;background:#e6e6e6;"></div>
<div class="a" style="left:1123.3px;top:372px;width:1px;height:304px;background:#e6e6e6;"></div>
<div class="a" style="left:1266.2px;top:372px;width:1px;height:304px;background:#e6e6e6;"></div>
<div class="t" style="left:534.00px;top:415.40px;font-size:14px;color:#202124;font-weight:bold;transform:scaleX(0.9101);transform-origin:0 0;">1. First open/visit</div>
<div class="t" style="left:686.50px;top:415.40px;font-size:14px;color:#202124;font-weight:bold;transform:scaleX(0.8794);transform-origin:0 0;">Total</div>
<div class="t" style="left:868.32px;top:416.25px;font-size:13px;color:#202124;font-weight:bold;transform:scaleX(0.9360);transform-origin:0 0;">47,194 (100.0%)</div>
<div class="t" style="left:1073.55px;top:416.25px;font-size:13px;color:#202124;font-weight:bold;transform:scaleX(0.8940);transform-origin:0 0;">75.6%</div>
<div class="t" style="left:1212.58px;top:416.25px;font-size:13px;color:#202124;font-weight:bold;transform:scaleX(0.9580);transform-origin:0 0;">11,506</div>
<div class="t" style="left:1368.03px;top:416.25px;font-size:13px;color:#202124;font-weight:bold;transform:scaleX(0.9000);transform-origin:0 0;">24.4%</div>
<div class="a" style="left:517.3px;top:439.3px;width:899.4000000000001px;height:1px;background:#ececec;"></div>
<div class="t" style="left:686.50px;top:450.10px;font-size:14px;color:#3c4043;transform:scaleX(0.9660);transform-origin:0 0;">desktop</div>
<div class="t" style="left:869.86px;top:450.95px;font-size:13px;color:#3c4043;transform:scaleX(0.9200);transform-origin:0 0;">25,826 (100.0%)</div>
<div class="t" style="left:1073.33px;top:450.95px;font-size:13px;color:#3c4043;transform:scaleX(0.9000);transform-origin:0 0;">77.7%</div>
<div class="t" style="left:1219.71px;top:450.95px;font-size:13px;color:#3c4043;transform:scaleX(0.9300);transform-origin:0 0;">5,753</div>
<div class="t" style="left:1368.03px;top:450.95px;font-size:13px;color:#3c4043;transform:scaleX(0.9000);transform-origin:0 0;">22.3%</div>
<div class="a" style="left:517.3px;top:474.0px;width:899.4000000000001px;height:1px;background:#ececec;"></div>
<div class="t" style="left:686.50px;top:484.80px;font-size:14px;color:#3c4043;transform:scaleX(0.9653);transform-origin:0 0;">mobile</div>
<div class="t" style="left:869.86px;top:485.65px;font-size:13px;color:#3c4043;transform:scaleX(0.9200);transform-origin:0 0;">18,349 (100.0%)</div>
<div class="t" style="left:1073.33px;top:485.65px;font-size:13px;color:#3c4043;transform:scaleX(0.9000);transform-origin:0 0;">72.9%</div>
<div class="t" style="left:1219.71px;top:485.65px;font-size:13px;color:#3c4043;transform:scaleX(0.9300);transform-origin:0 0;">4,976</div>
<div class="t" style="left:1368.03px;top:485.65px;font-size:13px;color:#3c4043;transform:scaleX(0.9000);transform-origin:0 0;">27.1%</div>
<div class="a" style="left:517.3px;top:508.70000000000005px;width:899.4000000000001px;height:1px;background:#ececec;"></div>
<div class="t" style="left:686.50px;top:519.50px;font-size:14px;color:#3c4043;transform:scaleX(0.9933);transform-origin:0 0;">tablet</div>
<div class="t" style="left:876.49px;top:520.35px;font-size:13px;color:#3c4043;transform:scaleX(0.9200);transform-origin:0 0;">2,806 (100.0%)</div>
<div class="t" style="left:1073.33px;top:520.35px;font-size:13px;color:#3c4043;transform:scaleX(0.9000);transform-origin:0 0;">74.1%</div>
<div class="t" style="left:1229.81px;top:520.35px;font-size:13px;color:#3c4043;transform:scaleX(0.9300);transform-origin:0 0;">727</div>
<div class="t" style="left:1368.03px;top:520.35px;font-size:13px;color:#3c4043;transform:scaleX(0.9000);transform-origin:0 0;">25.9%</div>
<div class="a" style="left:517.3px;top:543.4000000000001px;width:899.4000000000001px;height:1px;background:#ececec;"></div>
<div class="t" style="left:534.00px;top:554.20px;font-size:14px;color:#202124;font-weight:bold;transform:scaleX(0.9182);transform-origin:0 0;">2. Session start</div>
<div class="t" style="left:686.50px;top:554.20px;font-size:14px;color:#202124;font-weight:bold;transform:scaleX(0.8794);transform-origin:0 0;">Total</div>
<div class="t" style="left:875.07px;top:555.05px;font-size:13px;color:#202124;font-weight:bold;transform:scaleX(0.9360);transform-origin:0 0;">35,688 (75.6%)</div>
<div class="t" style="left:1073.55px;top:555.05px;font-size:13px;color:#202124;font-weight:bold;transform:scaleX(0.8940);transform-origin:0 0;">72.1%</div>
<div class="t" style="left:1218.80px;top:555.05px;font-size:13px;color:#202124;font-weight:bold;transform:scaleX(0.9580);transform-origin:0 0;">9,961</div>
<div class="t" style="left:1368.03px;top:555.05px;font-size:13px;color:#202124;font-weight:bold;transform:scaleX(0.9000);transform-origin:0 0;">27.9%</div>
<div class="a" style="left:517.3px;top:578.1px;width:899.4000000000001px;height:1px;background:#ececec;"></div>
<div class="t" style="left:686.50px;top:588.90px;font-size:14px;color:#3c4043;transform:scaleX(0.9660);transform-origin:0 0;">desktop</div>
<div class="t" style="left:876.49px;top:589.75px;font-size:13px;color:#3c4043;transform:scaleX(0.9200);transform-origin:0 0;">20,073 (77.7%)</div>
<div class="t" style="left:1073.33px;top:589.75px;font-size:13px;color:#3c4043;transform:scaleX(0.9000);transform-origin:0 0;">74.4%</div>
<div class="t" style="left:1219.71px;top:589.75px;font-size:13px;color:#3c4043;transform:scaleX(0.9300);transform-origin:0 0;">5,139</div>
<div class="t" style="left:1368.03px;top:589.75px;font-size:13px;color:#3c4043;transform:scaleX(0.9000);transform-origin:0 0;">25.6%</div>
<div class="a" style="left:517.3px;top:612.8000000000001px;width:899.4000000000001px;height:1px;background:#ececec;"></div>
<div class="t" style="left:686.50px;top:623.60px;font-size:14px;color:#3c4043;transform:scaleX(0.9653);transform-origin:0 0;">mobile</div>
<div class="t" style="left:876.49px;top:624.45px;font-size:13px;color:#3c4043;transform:scaleX(0.9200);transform-origin:0 0;">13,373 (72.9%)</div>
<div class="t" style="left:1073.33px;top:624.45px;font-size:13px;color:#3c4043;transform:scaleX(0.9000);transform-origin:0 0;">70.6%</div>
<div class="t" style="left:1219.71px;top:624.45px;font-size:13px;color:#3c4043;transform:scaleX(0.9300);transform-origin:0 0;">3,925</div>
<div class="t" style="left:1368.03px;top:624.45px;font-size:13px;color:#3c4043;transform:scaleX(0.9000);transform-origin:0 0;">29.4%</div>
<div class="a" style="left:517.3px;top:647.5px;width:899.4000000000001px;height:1px;background:#ececec;"></div>
<div class="t" style="left:686.50px;top:658.30px;font-size:14px;color:#b4b4b4;transform:scaleX(0.9933);transform-origin:0 0;">tablet</div>
<div class="t" style="left:883.19px;top:659.15px;font-size:13px;color:#b4b4b4;transform:scaleX(0.9200);transform-origin:0 0;">2,079 (74.1%)</div>
<div class="t" style="left:1073.33px;top:659.15px;font-size:13px;color:#b4b4b4;transform:scaleX(0.9000);transform-origin:0 0;">62.4%</div>
<div class="t" style="left:1229.81px;top:659.15px;font-size:13px;color:#b4b4b4;transform:scaleX(0.9300);transform-origin:0 0;">782</div>
<div class="t" style="left:1368.03px;top:659.15px;font-size:13px;color:#b4b4b4;transform:scaleX(0.9000);transform-origin:0 0;">37.6%</div>
<div class="a" style="left:503px;top:652px;width:920px;height:37px;background:linear-gradient(rgba(250,250,250,0),rgba(250,250,250,.35))"></div>
<div class="a" style="left:1422.8px;top:372.5px;width:9.2px;height:169.5px;background:#c6c6c6;"></div>
</body></html>
